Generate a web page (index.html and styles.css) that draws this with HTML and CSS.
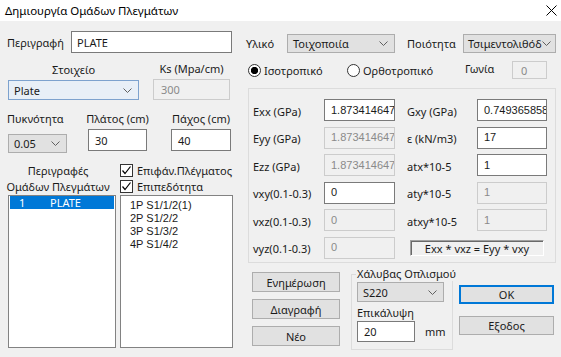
FILE: index.html
```html
<!DOCTYPE html>
<html lang="el">
<head>
<meta charset="utf-8">
<title>Δημιουργία Ομάδων Πλεγμάτων</title>
<link rel="stylesheet" href="styles.css">
</head>
<body>
<div class="titlebar">
  <span class="title">Δημιουργία Ομάδων Πλεγμάτων</span>
  <svg class="close" width="11" height="11" viewBox="0 0 11 11"><path d="M0.5 0.5L10.5 10.5M10.5 0.5L0.5 10.5" stroke="#000" stroke-width="1" fill="none"/></svg>
</div>

<div class="row1">
  <span class="lbl l-desc">Περιγραφή</span>
  <div class="edit w-plate">PLATE</div>
  <span class="lbl l-mat">Υλικό</span>
  <div class="combo w-mat"><span>Τοιχοποιία</span><svg class="chev" width="9" height="5" viewBox="0 0 9 5"><path d="M0.5 0.5L4.5 4.5L8.5 0.5" stroke="#606060" fill="none"/></svg></div>
  <span class="lbl l-qual">Ποιότητα</span>
  <div class="combo w-qual"><span>Τσιμεντολιθόδ</span><svg class="chev" width="9" height="5" viewBox="0 0 9 5"><path d="M0.5 0.5L4.5 4.5L8.5 0.5" stroke="#606060" fill="none"/></svg></div>
</div>

<div class="main">
  <div class="left">
    <div class="lrow-a">
      <span class="c-elem">Στοιχείο</span>
      <span class="c-ks">Ks (Mpa/cm)</span>
    </div>
    <div class="lrow-b">
      <div class="combo hot w-elem"><span>Plate</span><svg class="chev" width="9" height="5" viewBox="0 0 9 5"><path d="M0.5 0.5L4.5 4.5L8.5 0.5" stroke="#606060" fill="none"/></svg></div>
      <div class="edit disabled w-ks">300</div>
    </div>
    <div class="lrow-c">
      <span class="c-dens">Πυκνότητα</span>
      <span class="c-width">Πλάτος (cm)</span>
      <span class="c-thick">Πάχος (cm)</span>
    </div>
    <div class="lrow-d">
      <div class="combo w-dens"><span>0.05</span><svg class="chev" width="9" height="5" viewBox="0 0 9 5"><path d="M0.5 0.5L4.5 4.5L8.5 0.5" stroke="#606060" fill="none"/></svg></div>
      <div class="edit w-width">30</div>
      <div class="edit w-thick">40</div>
    </div>
    <div class="lrow-e">
      <div class="c-desc">
        <div class="line">Περιγραφές</div>
        <div class="line">Ομάδων Πλεγμάτων</div>
      </div>
      <div class="c-checks">
        <div class="line check"><span class="box"><svg width="11" height="11" viewBox="0 0 11 11"><path d="M1.5 5.5L4 8.5L9.5 1.5" stroke="#000" stroke-width="1.2" fill="none"/></svg></span>Επιφάν.Πλέγματος</div>
        <div class="line check"><span class="box"><svg width="11" height="11" viewBox="0 0 11 11"><path d="M1.5 5.5L4 8.5L9.5 1.5" stroke="#000" stroke-width="1.2" fill="none"/></svg></span>Επιπεδότητα</div>
      </div>
    </div>
    <div class="lists">
      <div class="list list1">
        <div class="item sel"><span class="num">1</span><span>PLATE</span></div>
      </div>
      <div class="list list2">
        <div class="item">1P S1/1/2(1)</div>
        <div class="item">2P S1/2/2</div>
        <div class="item">3P S1/3/2</div>
        <div class="item">4P S1/4/2</div>
      </div>
    </div>
  </div>

  <div class="right">
    <div class="radio-row">
      <label class="rad r1"><span class="dot on"></span>Ισοτροπικό</label>
      <label class="rad r2"><span class="dot"></span>Ορθοτροπικό</label>
      <span class="l-angle">Γωνία</span>
      <div class="edit disabled w-angle">0</div>
    </div>

    <div class="group">
      <div class="grid">
        <span class="glbl">Exx (GPa)</span>
        <div class="edit num-edit gin">1.873414647</div>
        <span class="glbl">Gxy (GPa)</span>
        <div class="edit num-edit gin2">0.749365858</div>

        <span class="glbl">Eyy (GPa)</span>
        <div class="edit num-edit disabled gin">1.873414647</div>
        <span class="glbl">ε (kN/m3)</span>
        <div class="edit num-edit gin2">17</div>

        <span class="glbl">Ezz (GPa)</span>
        <div class="edit num-edit disabled gin">1.873414647</div>
        <span class="glbl">atx*10-5</span>
        <div class="edit num-edit gin2">1</div>

        <span class="glbl">vxy(0.1-0.3)</span>
        <div class="edit num-edit gin">0</div>
        <span class="glbl">aty*10-5</span>
        <div class="edit num-edit disabled gin2">1</div>

        <span class="glbl">vxz(0.1-0.3)</span>
        <div class="edit num-edit disabled gin">0</div>
        <span class="glbl">atxy*10-5</span>
        <div class="edit num-edit disabled gin2">1</div>

        <span class="glbl">vyz(0.1-0.3)</span>
        <div class="edit num-edit disabled gin">0</div>
        <div class="formula">Exx * vxz = Eyy * vxy</div>
      </div>
    </div>

    <div class="bottom">
      <div class="btns">
        <div class="btn">Ενημέρωση</div>
        <div class="btn">Διαγραφή</div>
        <div class="btn">Νέο</div>
      </div>
      <fieldset class="steel">
        <legend>Χάλυβας Οπλισμού</legend>
        <div class="combo w-steel"><span>S220</span><svg class="chev" width="9" height="5" viewBox="0 0 9 5"><path d="M0.5 0.5L4.5 4.5L8.5 0.5" stroke="#606060" fill="none"/></svg></div>
        <div class="l-cover">Επικάλυψη</div>
        <div class="cover-row">
          <div class="edit w-cover">20</div>
          <span class="mm">mm</span>
        </div>
      </fieldset>
      <div class="okcol">
        <div class="btn ok">OK</div>
        <div class="btn exit">Εξοδος</div>
      </div>
    </div>
  </div>
</div>
</body>
</html>
```

FILE: styles.css
```css
* { box-sizing: border-box; }

html, body {
  margin: 0;
  padding: 0;
}

body {
  width: 561px;
  height: 357px;
  overflow: hidden;
  background: #f0f0f0;
  color: #1a1a1a;
  font-family: "Noto Sans", "Open Sans", sans-serif;
  font-size: 11px;
  line-height: 1;
  white-space: nowrap;
}

/* title bar */
.titlebar {
  height: 21px;
  background: #fff;
  display: flex;
  align-items: center;
  justify-content: space-between;
  padding: 0 4px 0 5px;
}
.title { font-size: 11.5px; color: #000; }
.close { display: block; }

/* generic controls */
.edit {
  height: 22px;
  background: #fff;
  border: 1px solid #7a7a7a;
  padding: 0 6px;
  display: flex;
  align-items: center;
  overflow: hidden;
}
.edit.disabled {
  background: #f0f0f0;
  border-color: #cccccc;
  color: #8a8a8a;
}
.num-edit {
  font-family: "Liberation Sans", Arial, sans-serif;
  font-size: 11px;
}
.combo {
  height: 19px;
  background: #e1e1e1;
  border: 1px solid #adadad;
  display: flex;
  align-items: center;
  justify-content: space-between;
  padding: 0 6px 0 5px;
  overflow: hidden;
}
.combo.hot {
  background: #e8eff7;
  border-color: #7da2ce;
}
.chev { display: block; flex: none; }
.btn {
  height: 20px;
  background: #e1e1e1;
  border: 1px solid #adadad;
  display: flex;
  align-items: center;
  justify-content: center;
}

/* row 1 */
.row1 {
  display: flex;
  align-items: center;
  height: 22px;
  margin-top: 10px;
}
.l-desc { margin-left: 7px; width: 64px; }
.w-plate { width: 161px; padding-left: 5px; }
.l-mat { margin-left: 14px; width: 41px; padding-top: 3px; }
.w-mat { width: 108px; margin-top: 2px; }
.l-qual { margin-left: 12px; width: 56px; padding-top: 3px; }
.w-qual { width: 93px; margin-top: 2px; padding-left: 4px; padding-right: 4px; }

/* main split */
.main { display: flex; }
.left { width: 248px; flex: none; }
.right { width: 313px; flex: none; }

/* left column */
.lrow-a {
  display: flex;
  align-items: center;
  height: 19px;
  margin-top: 7px;
}
.c-elem { margin-left: 8px; width: 131px; display: flex; justify-content: center; }
.c-ks { margin-left: 14px; width: 77px; display: flex; justify-content: center; padding-bottom: 3px; }

.lrow-b { display: flex; align-items: flex-start; height: 21px; }
.w-elem { margin-left: 8px; width: 131px; height: 20px; margin-top: 1px; }
.w-ks { margin-left: 14px; width: 77px; height: 21px; padding-left: 7px; }

.lrow-c {
  display: flex;
  align-items: center;
  height: 17px;
  margin-top: 10px;
}
.c-dens { margin-left: 7px; width: 60px; }
.c-width { margin-left: 21px; width: 59px; display: flex; justify-content: center; }
.c-thick { margin-left: 24px; width: 60px; display: flex; justify-content: center; }

.lrow-d { display: flex; align-items: flex-start; height: 24px; margin-top: 2px; }
.w-dens { margin-left: 8px; width: 59px; height: 19px; margin-top: 5px; }
.w-width { margin-left: 21px; width: 59px; }
.w-thick { margin-left: 24px; width: 60px; }

.lrow-e { display: flex; margin-top: 9px; }
.line { height: 16px; display: flex; align-items: center; }
.c-desc { margin-left: 6px; width: 104px; }
.c-desc .line { justify-content: center; }
.c-checks { margin-left: 10px; }
.check .box {
  width: 13px;
  height: 13px;
  border: 1px solid #333;
  background: #fff;
  margin-right: 4px;
  display: flex;
  align-items: center;
  justify-content: center;
}
.check .box svg { display: block; }

.lists { display: flex; margin-top: 1px; }
.list {
  height: 153px;
  background: #fff;
  border: 1px solid #828282;
  font-family: "Liberation Sans", Arial, sans-serif;
  font-size: 11px;
}
.list1 { margin-left: 8px; width: 108px; padding: 0 1px; }
.list2 { margin-left: 4px; width: 113px; padding: 3px 0 0 9px; }
.item { height: 13px; display: flex; align-items: center; }
.item.sel {
  background: #0078d7;
  color: #fff;
  font-family: "Noto Sans", sans-serif;
  font-size: 11px;
}
.item .num { margin-left: 9px; width: 31px; }

/* right column */
.radio-row {
  display: flex;
  align-items: center;
  height: 18px;
  margin-top: 8px;
}
.rad { display: flex; align-items: center; }
.r1 { width: 99px; }
.r2 { width: 118px; }
.dot {
  width: 13px;
  height: 13px;
  border: 1px solid #333;
  border-radius: 50%;
  background: #fff;
  margin-right: 3px;
  flex: none;
}
.dot.on {
  background: radial-gradient(circle, #000 0 3.3px, #fff 4px);
}
.l-angle { width: 47px; padding-bottom: 3px; }
.w-angle { width: 35px; height: 18px; padding-left: 8px; }

.group {
  margin-top: 9px;
  width: 308px;
  height: 175px;
  border: 1px solid #dcdcdc;
  padding: 10px 0 0 4px;
}
.grid {
  display: grid;
  grid-template-columns: 71px 83px 70px 70px;
  grid-auto-rows: 22px;
  row-gap: 5.5px;
}
.glbl { display: flex; align-items: center; padding-top: 2px; }
.gin { width: 71px; }
.gin2 { width: 70px; }
.formula {
  grid-column: 3 / span 2;
  margin: 3px 3px 0 3px;
  height: 16px;
  border: 1px solid;
  border-color: #a0a0a0 #fff #fff #a0a0a0;
  box-shadow: inset 1px 1px 0 #696969;
  display: flex;
  align-items: center;
  justify-content: center;
  padding-top: 1px;
}

/* bottom */
.bottom { display: flex; align-items: flex-start; }
.btns {
  margin-left: 4px;
  width: 88px;
  margin-top: 9px;
  display: flex;
  flex-direction: column;
  gap: 7px;
}
.steel {
  margin: 4px 0 0 11px;
  width: 102px;
  height: 83px;
  border: 1px solid #dcdcdc;
  padding: 0 0 0 5px;
  min-inline-size: 0;
}
.steel legend {
  padding: 0 1px;
  margin-left: -1px;
  line-height: 14px;
}
.w-steel { width: 87px; height: 20px; margin-top: 1px; }
.l-cover { height: 16px; margin-top: 2px; display: flex; align-items: center; }
.cover-row { display: flex; align-items: center; margin-top: 1px; }
.w-cover { width: 58px; height: 21px; }
.mm { margin-left: 10px; }
.okcol { margin-left: 6px; width: 95px; }
.ok {
  margin-top: 22px;
  height: 19px;
  border: 2px solid #0078d7;
}
.exit { margin-top: 12px; height: 19px; }
```
